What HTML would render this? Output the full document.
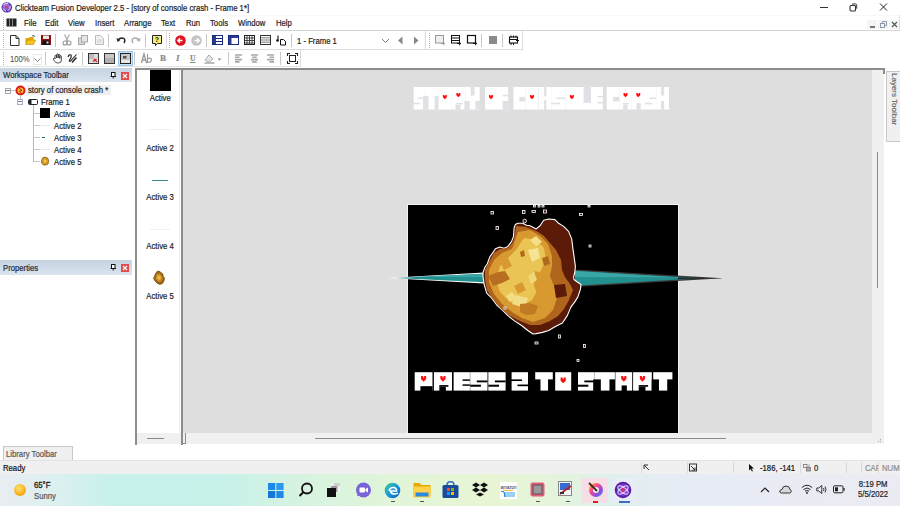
<!DOCTYPE html>
<html><head><meta charset="utf-8">
<style>
*{margin:0;padding:0;box-sizing:border-box}
html,body{width:900px;height:506px;overflow:hidden;background:#fff;font-family:"Liberation Sans",sans-serif;font-size:8px;color:#000;position:relative}
.a{position:absolute}
.t{position:absolute;white-space:nowrap;line-height:1;-webkit-text-stroke:0.2px currentColor}
svg{position:absolute;overflow:visible}
</style></head><body>
<svg style="left:0;top:0" width="15" height="15"><defs><radialGradient id="ai" cx="0.45" cy="0.4" r="0.6"><stop offset="0" stop-color="#b8a0f0"/><stop offset="1" stop-color="#4a1aa8"/></radialGradient></defs><circle cx="6.8" cy="7.3" r="5.3" fill="url(#ai)"/><path d="M3.5 5 Q5 2.8 8 3.2 M10.2 6 Q10.5 9 8 10.8 M3.3 8.5 Q4 10.5 6 11" fill="none" stroke="#efe6ff" stroke-width="1"/><circle cx="6.6" cy="7" r="1.7" fill="#d03a78"/></svg>
<div class="t" style="left:15px;top:4px;font-size:9px;color:#1a1a1a;transform:scaleX(0.857);transform-origin:0 0;">Clickteam Fusion Developer 2.5 - [story of console crash - Frame 1*]</div>
<div class="a" style="left:820px;top:7px;width:8px;height:1px;background:#333;"></div>
<svg style="left:849px;top:3px" width="10" height="10"><rect x="1" y="2.5" width="5.5" height="5.5" rx="1" fill="none" stroke="#333" stroke-width="1.1"/><path d="M3 1 h3.5 a1.2 1.2 0 0 1 1.2 1.2 v3.5" fill="none" stroke="#333" stroke-width="1"/></svg>
<svg style="left:879px;top:3px" width="10" height="10"><path d="M1 0.5 L8 7.5 M8 0.5 L1 7.5" stroke="#222" stroke-width="1"/></svg>
<div class="a" style="left:0px;top:15px;width:900px;height:1px;background:#f8f8f8;"></div>
<div class="a" style="left:3px;top:17px;width:1px;height:1px;background:#b8b8b8;"></div>
<div class="a" style="left:3px;top:19px;width:1px;height:1px;background:#b8b8b8;"></div>
<div class="a" style="left:3px;top:21px;width:1px;height:1px;background:#b8b8b8;"></div>
<div class="a" style="left:3px;top:23px;width:1px;height:1px;background:#b8b8b8;"></div>
<div class="a" style="left:3px;top:25px;width:1px;height:1px;background:#b8b8b8;"></div>
<div class="a" style="left:3px;top:27px;width:1px;height:1px;background:#b8b8b8;"></div>
<div class="a" style="left:3px;top:29px;width:1px;height:1px;background:#b8b8b8;"></div>
<div class="a" style="left:899px;top:15px;width:1px;height:16px;background:#e0e0e0;"></div>
<svg style="left:6px;top:18px" width="12" height="10"><rect x="0.5" y="0.5" width="10" height="8" fill="#222"/><rect x="3" y="1" width="1" height="7" fill="#888"/><rect x="6" y="1" width="1" height="7" fill="#888"/></svg>
<div class="t" style="left:24px;top:19px;font-size:9px;color:#1a1a1a;transform:scaleX(0.857);transform-origin:0 0;">File</div>
<div class="t" style="left:45px;top:19px;font-size:9px;color:#1a1a1a;transform:scaleX(0.857);transform-origin:0 0;">Edit</div>
<div class="t" style="left:68px;top:19px;font-size:9px;color:#1a1a1a;transform:scaleX(0.857);transform-origin:0 0;">View</div>
<div class="t" style="left:95px;top:19px;font-size:9px;color:#1a1a1a;transform:scaleX(0.857);transform-origin:0 0;">Insert</div>
<div class="t" style="left:124px;top:19px;font-size:9px;color:#1a1a1a;transform:scaleX(0.857);transform-origin:0 0;">Arrange</div>
<div class="t" style="left:161px;top:19px;font-size:9px;color:#1a1a1a;transform:scaleX(0.857);transform-origin:0 0;">Text</div>
<div class="t" style="left:186px;top:19px;font-size:9px;color:#1a1a1a;transform:scaleX(0.857);transform-origin:0 0;">Run</div>
<div class="t" style="left:210px;top:19px;font-size:9px;color:#1a1a1a;transform:scaleX(0.857);transform-origin:0 0;">Tools</div>
<div class="t" style="left:238px;top:19px;font-size:9px;color:#1a1a1a;transform:scaleX(0.857);transform-origin:0 0;">Window</div>
<div class="t" style="left:276px;top:19px;font-size:9px;color:#1a1a1a;transform:scaleX(0.857);transform-origin:0 0;">Help</div>
<div class="a" style="left:867px;top:20px;width:10px;height:9px;background:#f4f4f4;"></div>
<div class="a" style="left:878px;top:20px;width:10px;height:9px;background:#f4f4f4;"></div>
<div class="a" style="left:889px;top:20px;width:10px;height:9px;background:#f4f4f4;"></div>
<div class="a" style="left:870px;top:26px;width:5px;height:1.5px;background:#777;"></div>
<svg style="left:880px;top:21px" width="8" height="8"><rect x="0.5" y="2.5" width="4" height="4" fill="none" stroke="#8890a8" stroke-width="0.9"/><path d="M2.5 2.5 v-2 h4 v4 h-2" fill="none" stroke="#8890a8" stroke-width="0.9"/></svg>
<svg style="left:891px;top:21px" width="8" height="8"><path d="M1 1 L6 6 M6 1 L1 6" stroke="#555" stroke-width="1.1"/></svg>
<div class="a" style="left:0px;top:30px;width:900px;height:1px;background:#d4d4d4;"></div>
<div class="a" style="left:0px;top:49px;width:522px;height:1px;background:#dcdcdc;"></div>
<div class="a" style="left:522px;top:31px;width:1px;height:19px;background:#dcdcdc;"></div>
<div class="a" style="left:3px;top:33px;width:1px;height:1px;background:#b0b0b0;"></div>
<div class="a" style="left:3px;top:35px;width:1px;height:1px;background:#b0b0b0;"></div>
<div class="a" style="left:3px;top:37px;width:1px;height:1px;background:#b0b0b0;"></div>
<div class="a" style="left:3px;top:39px;width:1px;height:1px;background:#b0b0b0;"></div>
<div class="a" style="left:3px;top:41px;width:1px;height:1px;background:#b0b0b0;"></div>
<div class="a" style="left:3px;top:43px;width:1px;height:1px;background:#b0b0b0;"></div>
<div class="a" style="left:3px;top:45px;width:1px;height:1px;background:#b0b0b0;"></div>
<div class="a" style="left:3px;top:47px;width:1px;height:1px;background:#b0b0b0;"></div>
<svg style="left:10px;top:35px" width="10" height="11"><path d="M0.5 0.5 h5.5 l3 3 v7 h-8.5z" fill="#fff" stroke="#333"/><path d="M6 0.5 v3 h3" fill="none" stroke="#333"/></svg>
<svg style="left:25px;top:35px" width="11" height="10"><path d="M0.5 3 h3 l1 -1 h4 v6.5 h-8z" fill="#e0a800"/><path d="M0.5 9.5 l2-4.5 h8 l-2 4.5z" fill="#f7c520" stroke="#c08a00" stroke-width="0.6"/><path d="M7 1 l2 -0.5 l0.5 1.5" stroke="#335" fill="none" stroke-width="0.8"/></svg>
<svg style="left:41px;top:35px" width="10" height="10"><rect x="0" y="0" width="10" height="10" fill="#8a0f15"/><rect x="2" y="0.5" width="6" height="3.5" fill="#e8e8e8"/><rect x="1.5" y="5.5" width="7" height="4.5" fill="#111"/><rect x="5.5" y="6.5" width="2" height="2" fill="#ddd"/></svg>
<div class="a" style="left:55px;top:34px;width:1px;height:13px;background:#c8c8c8;"></div>
<svg style="left:62px;top:34px" width="10" height="12"><path d="M2.5 0.5 L6 7 M7.5 0.5 L4 7" stroke="#aaa" stroke-width="1.2"/><circle cx="3" cy="9" r="2" fill="none" stroke="#999" stroke-width="1.1"/><circle cx="7" cy="9" r="2" fill="none" stroke="#999" stroke-width="1.1"/></svg>
<svg style="left:78px;top:35px" width="10" height="10"><rect x="0.5" y="3" width="6" height="6.5" fill="#d8d8d8" stroke="#aaa"/><rect x="3.5" y="0.5" width="6" height="6.5" fill="#e6e6e6" stroke="#aaa"/></svg>
<svg style="left:95px;top:35px" width="9" height="10"><path d="M0.5 0.5 h5 l3 3 v6 h-8z" fill="#f2f2f2" stroke="#bbb"/><path d="M2 5 h5 M2 7 h5" stroke="#ccc"/></svg>
<div class="a" style="left:108px;top:34px;width:1px;height:13px;background:#c8c8c8;"></div>
<svg style="left:116px;top:36px" width="10" height="8"><path d="M2 4 Q5 0.5 8.5 3 Q9.5 5 8 7" fill="none" stroke="#222" stroke-width="1.5"/><path d="M0.5 2 L1.5 6 L4.5 4z" fill="#222"/></svg>
<svg style="left:131px;top:36px" width="10" height="8"><path d="M8 4 Q5 0.5 1.5 3 Q0.5 5 2 7" fill="none" stroke="#aaa" stroke-width="1.5"/><path d="M9.5 2 L8.5 6 L5.5 4z" fill="#aaa"/></svg>
<div class="a" style="left:145px;top:34px;width:1px;height:13px;background:#c8c8c8;"></div>
<svg style="left:152px;top:35px" width="10" height="11"><path d="M0.5 0.5 h9 v8 h-4 l-2 2 v-2 h-3z" fill="#f5f07a" stroke="#222"/><text x="5" y="7.2" font-size="7" font-weight="bold" text-anchor="middle" font-family="Liberation Sans" fill="#111">?</text></svg>
<div class="a" style="left:166px;top:31px;width:1px;height:18px;background:#e0e0e0;"></div>
<div class="a" style="left:169px;top:33px;width:1px;height:1px;background:#b0b0b0;"></div>
<div class="a" style="left:169px;top:35px;width:1px;height:1px;background:#b0b0b0;"></div>
<div class="a" style="left:169px;top:37px;width:1px;height:1px;background:#b0b0b0;"></div>
<div class="a" style="left:169px;top:39px;width:1px;height:1px;background:#b0b0b0;"></div>
<div class="a" style="left:169px;top:41px;width:1px;height:1px;background:#b0b0b0;"></div>
<div class="a" style="left:169px;top:43px;width:1px;height:1px;background:#b0b0b0;"></div>
<div class="a" style="left:169px;top:45px;width:1px;height:1px;background:#b0b0b0;"></div>
<div class="a" style="left:169px;top:47px;width:1px;height:1px;background:#b0b0b0;"></div>
<svg style="left:175px;top:35px" width="11" height="11"><circle cx="5.5" cy="5.5" r="5.3" fill="#e0141e"/><path d="M7.5 5.5 h-4 M5 3.2 L2.8 5.5 L5 7.8" stroke="#fff" stroke-width="1.4" fill="none"/></svg>
<svg style="left:191px;top:35px" width="11" height="11"><circle cx="5.5" cy="5.5" r="5.3" fill="#c4c4c4"/><path d="M3.5 5.5 h4 M6 3.2 L8.2 5.5 L6 7.8" stroke="#fff" stroke-width="1.4" fill="none"/></svg>
<div class="a" style="left:206px;top:34px;width:1px;height:13px;background:#c8c8c8;"></div>
<svg style="left:212px;top:35px" width="11" height="10"><rect x="0.5" y="0.5" width="10" height="9" fill="#fff" stroke="#1a2a7a"/><rect x="1" y="1" width="3" height="8" fill="#2a3a9a"/><path d="M4 3.5 h6 M4 6.5 h6" stroke="#1a2a7a"/></svg>
<svg style="left:228px;top:35px" width="11" height="10"><rect x="0.5" y="0.5" width="10" height="9" fill="#fff" stroke="#1a2a7a"/><rect x="1" y="1" width="2.5" height="8" fill="#2a3a9a"/><rect x="1" y="1" width="9" height="2" fill="#2a3a9a"/></svg>
<svg style="left:244px;top:35px" width="11" height="10"><rect x="0.5" y="0.5" width="10" height="9" fill="#fff" stroke="#222"/><path d="M0.5 3 h10 M0.5 5.5 h10 M0.5 8 h10 M3 0.5 v9 M5.5 0.5 v9 M8 0.5 v9" stroke="#333" stroke-width="0.9"/></svg>
<svg style="left:260px;top:35px" width="11" height="10"><rect x="0.5" y="0.5" width="10" height="9" fill="#fff" stroke="#333"/><path d="M1 2.8 h9 M1 5 h9 M1 7.2 h9" stroke="#555" stroke-width="0.8"/></svg>
<svg style="left:276px;top:35px" width="10" height="11"><path d="M2 0.5 v5" stroke="#111" stroke-width="1.1"/><circle cx="1.5" cy="5.5" r="1.3" fill="#111"/><path d="M4.5 4.5 h3 l2 2 v3.5 h-5z" fill="#fff" stroke="#111"/></svg>
<div class="a" style="left:291px;top:34px;width:1px;height:13px;background:#c8c8c8;"></div>
<div class="t" style="left:297px;top:37px;font-size:9px;color:#222;transform:scaleX(0.857);transform-origin:0 0;">1 - Frame 1</div>
<svg style="left:381px;top:37px" width="10" height="8"><path d="M1 2 L4.5 5.5 L8 2" fill="none" stroke="#666" stroke-width="0.9"/></svg>
<svg style="left:397px;top:36px" width="7" height="9"><path d="M5.5 0.5 L1 4.5 L5.5 8.5z" fill="#888"/></svg>
<svg style="left:413px;top:36px" width="7" height="9"><path d="M1 0.5 L5.5 4.5 L1 8.5z" fill="#888"/></svg>
<div class="a" style="left:425px;top:31px;width:1px;height:19px;background:#dcdcdc;"></div>
<div class="a" style="left:429px;top:33px;width:1px;height:1px;background:#b0b0b0;"></div>
<div class="a" style="left:429px;top:35px;width:1px;height:1px;background:#b0b0b0;"></div>
<div class="a" style="left:429px;top:37px;width:1px;height:1px;background:#b0b0b0;"></div>
<div class="a" style="left:429px;top:39px;width:1px;height:1px;background:#b0b0b0;"></div>
<div class="a" style="left:429px;top:41px;width:1px;height:1px;background:#b0b0b0;"></div>
<div class="a" style="left:429px;top:43px;width:1px;height:1px;background:#b0b0b0;"></div>
<div class="a" style="left:429px;top:45px;width:1px;height:1px;background:#b0b0b0;"></div>
<div class="a" style="left:429px;top:47px;width:1px;height:1px;background:#b0b0b0;"></div>
<svg style="left:435px;top:35px" width="11" height="11"><rect x="0.5" y="0.5" width="8" height="7.5" fill="#eee" stroke="#999"/><path d="M6 8.5 h3.5 M8 6.8 L9.8 8.5 L8 10.2" stroke="#999" fill="none"/></svg>
<svg style="left:451px;top:35px" width="11" height="11"><rect x="0.5" y="0.5" width="8" height="7.5" fill="#fff" stroke="#111"/><path d="M0.5 3 h8 M0.5 5.5 h8" stroke="#111"/><path d="M6 8.5 h3.5 M8 6.8 L9.8 8.5 L8 10.2" stroke="#111" fill="none"/></svg>
<svg style="left:467px;top:35px" width="11" height="11"><rect x="0.5" y="0.5" width="8" height="7.5" fill="#fff" stroke="#111" stroke-width="1.2"/><path d="M6 8.5 h3.5 M8 6.8 L9.8 8.5 L8 10.2" stroke="#111" fill="none"/></svg>
<div class="a" style="left:481px;top:34px;width:1px;height:13px;background:#c8c8c8;"></div>
<div class="a" style="left:489px;top:36px;width:8px;height:8px;background:#8a8a8a;"></div>
<div class="a" style="left:502px;top:34px;width:1px;height:13px;background:#c8c8c8;"></div>
<svg style="left:509px;top:35px" width="11" height="11"><rect x="0.5" y="2" width="8" height="6" fill="#fff" stroke="#111" stroke-width="1.1"/><path d="M0.5 4.5 h8 M2 0.5 v2 M4.5 0.5 v2 M7 0.5 v2 M2 8 v2 M4.5 8 v2" stroke="#111"/><path d="M7 5.5 h3 " stroke="#111"/></svg>
<div class="a" style="left:0px;top:66px;width:300px;height:1px;background:#e2e2e2;"></div>
<div class="a" style="left:300px;top:50px;width:1px;height:17px;background:#dcdcdc;"></div>
<div class="a" style="left:3px;top:52px;width:1px;height:1px;background:#b0b0b0;"></div>
<div class="a" style="left:3px;top:54px;width:1px;height:1px;background:#b0b0b0;"></div>
<div class="a" style="left:3px;top:56px;width:1px;height:1px;background:#b0b0b0;"></div>
<div class="a" style="left:3px;top:58px;width:1px;height:1px;background:#b0b0b0;"></div>
<div class="a" style="left:3px;top:60px;width:1px;height:1px;background:#b0b0b0;"></div>
<div class="a" style="left:3px;top:62px;width:1px;height:1px;background:#b0b0b0;"></div>
<div class="a" style="left:3px;top:64px;width:1px;height:1px;background:#b0b0b0;"></div>
<div class="t" style="left:10px;top:55px;font-size:9px;color:#444;transform:scaleX(0.857);transform-origin:0 0;-webkit-text-stroke:0">100%</div>
<div class="a" style="left:33px;top:54px;width:9px;height:11px;background:#fff;border:1px solid #e8e8e8"></div>
<svg style="left:33px;top:57px" width="9" height="6"><path d="M1.5 1.5 L4.5 4.5 L7.5 1.5" fill="none" stroke="#777" stroke-width="0.9"/></svg>
<div class="a" style="left:45px;top:52px;width:1px;height:13px;background:#c8c8c8;"></div>
<svg style="left:53px;top:53px" width="10" height="11"><path d="M2 6 V3 a0.8 0.8 0 0 1 1.6 0 V5 V1.6 a0.8 0.8 0 0 1 1.6 0 V5 V2 a0.8 0.8 0 0 1 1.6 0 V5.5 V3.5 a0.8 0.8 0 0 1 1.6 0 V7 Q8.4 10 5.5 10 H4.5 Q2.5 10 1 7.5 L0.5 6 a0.8 0.8 0 0 1 1.5 -0.5z" fill="#fff" stroke="#222" stroke-width="0.8"/></svg>
<svg style="left:67px;top:53px" width="11" height="11"><path d="M1 4 Q2 1 4 2 Q5 4 2.5 7 Q1.5 9 3.5 8 L9.5 1.5" fill="none" stroke="#222" stroke-width="1.1"/><path d="M5 9.5 L9.5 4.5" stroke="#222" stroke-width="1.5"/></svg>
<div class="a" style="left:82px;top:52px;width:1px;height:13px;background:#c8c8c8;"></div>
<svg style="left:88px;top:53px" width="11" height="11"><rect x="0.5" y="0.5" width="10" height="10" fill="#ddd" stroke="#333"/><rect x="1" y="1" width="5" height="5" fill="#bbb"/><path d="M5 8.5 L8.5 6 M6 6 L9 9" stroke="#e02020" stroke-width="1.2"/></svg>
<svg style="left:104px;top:53px" width="11" height="11"><rect x="0.5" y="0.5" width="10" height="10" fill="#b0b0b0" stroke="#333"/><rect x="1" y="1" width="9" height="4" fill="#c8c8c8"/></svg>
<div class="a" style="left:118px;top:51px;width:15px;height:15px;background:#cce4f7;border:1px solid #99c9ef"></div>
<svg style="left:120px;top:53px" width="11" height="11"><rect x="0.5" y="0.5" width="10" height="10" fill="#c8c8c8" stroke="#222"/><rect x="3" y="3" width="3.5" height="2.5" fill="#555"/><rect x="1" y="7" width="9" height="3" fill="#e8e8e8"/></svg>
<div class="a" style="left:134px;top:52px;width:1px;height:13px;background:#c8c8c8;"></div>
<svg style="left:141px;top:53px" width="12" height="11"><path d="M0.5 10 L3 1 L5.5 10 M1.5 7 h3" stroke="#999" stroke-width="1.3" fill="none"/><path d="M6.5 1 v9 M6.5 6 q3 -2 4 0.5 q0 3 -4 3" stroke="#999" stroke-width="1.1" fill="none"/></svg>
<div class="t" style="left:160px;top:54px;font-size:9px;color:#8a8a8a;font-weight:bold;font-family:\"Liberation Serif\",serif">B</div>
<div class="t" style="left:176px;top:54px;font-size:9px;color:#8a8a8a;font-weight:bold;font-style:italic;font-family:\"Liberation Serif\",serif">I</div>
<div class="t" style="left:190px;top:54px;font-size:9px;color:#8a8a8a;transform:scaleX(0.857);transform-origin:0 0;font-weight:bold;text-decoration:underline;font-family:\"Liberation Serif\",serif">U</div>
<svg style="left:204px;top:53px" width="20" height="11"><path d="M1 7 L5 2 L9 6 L5 9z" fill="#e8e8e8" stroke="#aaa"/><rect x="0.5" y="9" width="10" height="2" fill="#bbb"/><path d="M13.5 5.5 h4 l-2 2z" fill="#888"/></svg>
<div class="a" style="left:228px;top:52px;width:1px;height:13px;background:#c8c8c8;"></div>
<svg style="left:235px;top:54px" width="8" height="9"><path d="M0 1 h7 M0 3.3 h4.5 M0 5.6 h7 M0 7.9 h4.5" stroke="#a8a8a8" stroke-width="1.6"/></svg>
<svg style="left:251px;top:54px" width="8" height="9"><path d="M0 1 h7 M1.2 3.3 h4.6 M0 5.6 h7 M1.2 7.9 h4.6" stroke="#a8a8a8" stroke-width="1.6"/></svg>
<svg style="left:267px;top:54px" width="8" height="9"><path d="M0 1 h7 M2.5 3.3 h4.5 M0 5.6 h7 M2.5 7.9 h4.5" stroke="#a8a8a8" stroke-width="1.6"/></svg>
<div class="a" style="left:280px;top:52px;width:1px;height:13px;background:#c8c8c8;"></div>
<svg style="left:287px;top:53px" width="11" height="11"><rect x="2.5" y="2.5" width="6" height="6" fill="#fff" stroke="#222"/><path d="M0.5 3 V0.5 H3 M8 0.5 H10.5 V3 M10.5 8 V10.5 H8 M3 10.5 H0.5 V8" fill="none" stroke="#222" stroke-width="1.1"/></svg>
<div class="a" style="left:0px;top:68px;width:132px;height:14px;background:linear-gradient(#c6d3e2,#dbe4ee);"></div>
<div class="t" style="left:3px;top:71px;font-size:9px;color:#1c2838;transform:scaleX(0.857);transform-origin:0 0;">Workspace Toolbar</div>
<svg style="left:110px;top:72px" width="7" height="7"><rect x="1.5" y="0.5" width="3.5" height="4" fill="#fff" stroke="#111" stroke-width="1"/><path d="M0.5 4.5 h5.5 M3.2 4.5 v2" stroke="#111" stroke-width="1"/></svg>
<div class="a" style="left:121px;top:72px;width:8px;height:8px;background:#e04a4a;"></div>
<svg style="left:121px;top:72px" width="8" height="8"><path d="M2 2 L6 6 M6 2 L2 6" stroke="#fff" stroke-width="1.1"/></svg>
<div class="a" style="left:27px;top:85px;width:84px;height:10px;background:#f0f0f0;"></div>
<div class="a" style="left:5px;top:88px;width:6px;height:6px;background:#fff;border:1px solid #a8a8a8"></div>
<div class="a" style="left:6px;top:90px;width:4px;height:1px;background:#6a7aa0;"></div>
<div class="a" style="left:11px;top:90px;width:4px;height:1px;background:#c0c0c0;"></div>
<svg style="left:15px;top:85px" width="11" height="11"><circle cx="5.5" cy="5.5" r="5" fill="#e01818"/><circle cx="5.5" cy="5.5" r="3" fill="#f5c030"/><path d="M4 3 L7 5.5 L4.5 6 L6.5 8.5" stroke="#c01010" fill="none" stroke-width="0.9"/></svg>
<div class="t" style="left:28px;top:86px;font-size:9px;color:#1a1a1a;transform:scaleX(0.857);transform-origin:0 0;">story of console crash *</div>
<div class="a" style="left:20px;top:95px;width:1px;height:4px;background:#c0c0c0;"></div>
<div class="a" style="left:17px;top:99px;width:6px;height:6px;background:#fff;border:1px solid #a8b0c8"></div>
<div class="a" style="left:18px;top:101px;width:4px;height:1px;background:#6a7aa0;"></div>
<svg style="left:28px;top:99px" width="10" height="6"><rect x="0.5" y="0.5" width="9" height="5" rx="1" fill="#fff" stroke="#222"/><rect x="1" y="1" width="2.5" height="4" fill="#222"/></svg>
<div class="t" style="left:41px;top:98px;font-size:9px;color:#1a1a1a;transform:scaleX(0.857);transform-origin:0 0;">Frame 1</div>
<div class="a" style="left:33px;top:105px;width:1px;height:57px;background:#b8b8b8;"></div>
<div class="a" style="left:34px;top:113px;width:6px;height:1px;background:#c8c8c8;"></div>
<div class="a" style="left:34px;top:125px;width:6px;height:1px;background:#c8c8c8;"></div>
<div class="a" style="left:34px;top:137px;width:6px;height:1px;background:#c8c8c8;"></div>
<div class="a" style="left:34px;top:149px;width:6px;height:1px;background:#c8c8c8;"></div>
<div class="a" style="left:34px;top:161px;width:6px;height:1px;background:#c8c8c8;"></div>
<div class="a" style="left:40px;top:108px;width:10px;height:10px;background:#000;"></div>
<div class="a" style="left:40px;top:125px;width:10px;height:1px;background:#e4eef2;"></div>
<div class="a" style="left:42px;top:137px;width:3px;height:1px;background:#2a6a6a;"></div>
<div class="a" style="left:40px;top:149px;width:10px;height:1px;background:#eee8ea;"></div>
<svg style="left:40px;top:156px" width="10" height="10"><path d="M3 1.5 Q6 0.5 8 2.5 Q9.5 5 8 8 Q6 9.5 3.5 9 Q1 7.5 1.5 4.5z" fill="#d89a20" stroke="#7a4a10" stroke-width="0.7"/><path d="M4 3.5 Q6 3 6.5 5 Q6 7 4.5 7z" fill="#f4d060"/></svg>
<div class="t" style="left:54px;top:110px;font-size:9px;color:#1a1a1a;transform:scaleX(0.857);transform-origin:0 0;">Active</div>
<div class="t" style="left:54px;top:122px;font-size:9px;color:#1a1a1a;transform:scaleX(0.857);transform-origin:0 0;">Active 2</div>
<div class="t" style="left:54px;top:134px;font-size:9px;color:#1a1a1a;transform:scaleX(0.857);transform-origin:0 0;">Active 3</div>
<div class="t" style="left:54px;top:146px;font-size:9px;color:#1a1a1a;transform:scaleX(0.857);transform-origin:0 0;">Active 4</div>
<div class="t" style="left:54px;top:158px;font-size:9px;color:#1a1a1a;transform:scaleX(0.857);transform-origin:0 0;">Active 5</div>
<div class="a" style="left:0px;top:260px;width:132px;height:15px;background:linear-gradient(#c6d3e2,#dbe4ee);"></div>
<div class="t" style="left:3px;top:264px;font-size:9px;color:#1c2838;transform:scaleX(0.857);transform-origin:0 0;">Properties</div>
<svg style="left:110px;top:264px" width="7" height="7"><rect x="1.5" y="0.5" width="3.5" height="4" fill="#fff" stroke="#111" stroke-width="1"/><path d="M0.5 4.5 h5.5 M3.2 4.5 v2" stroke="#111" stroke-width="1"/></svg>
<div class="a" style="left:121px;top:264px;width:8px;height:8px;background:#e04a4a;"></div>
<svg style="left:121px;top:264px" width="8" height="8"><path d="M2 2 L6 6 M6 2 L2 6" stroke="#fff" stroke-width="1.1"/></svg>
<div class="a" style="left:135px;top:68px;width:2px;height:377px;background:#8c8c8c;"></div>
<div class="a" style="left:135px;top:68px;width:46px;height:2px;background:#8c8c8c;"></div>
<div class="a" style="left:179px;top:70px;width:1px;height:363px;background:#f0f0f0;"></div>
<div class="a" style="left:137px;top:433px;width:44px;height:11px;background:#f0f0f0;"></div>
<div class="a" style="left:147px;top:438px;width:17px;height:1px;background:#8a8a8a;"></div>
<div class="a" style="left:150px;top:70px;width:21px;height:21px;background:#000;"></div>
<div class="a" style="left:149px;top:129px;width:22px;height:1px;background:#e8f0f4;"></div>
<div class="a" style="left:152px;top:180px;width:16px;height:1px;background:#3a8a8a;"></div>
<div class="a" style="left:150px;top:229px;width:20px;height:1px;background:#eef0f4;"></div>
<svg style="left:152px;top:269px" width="14" height="17"><path d="M5.5 2 L8 2.5 L9.5 4 L11 5 L11 7 L12.5 9 L12 12 L10.5 14.5 L8 15.5 L5.5 14.5 L3 12 L1.5 9.5 L2.5 7 L3.5 4.5z" fill="#9a6414" stroke="#6a3a08" stroke-width="0.6"/><path d="M5 5 L8 4.5 L10 7.5 L10.5 10.5 L8.5 13 L6 12.5 L3.5 10 L4 7z" fill="#cc8e26"/><path d="M5.5 7 L8 6.5 L9 9 L7.5 11 L5.5 10z" fill="#e8b848"/></svg>
<div class="t" style="left:138px;width:45px;text-align:center;top:94px;font-size:9px;color:#1a1a1a"><span style="display:inline-block;transform:scaleX(0.857)">Active</span></div>
<div class="t" style="left:138px;width:45px;text-align:center;top:144px;font-size:9px;color:#1a1a1a"><span style="display:inline-block;transform:scaleX(0.857)">Active 2</span></div>
<div class="t" style="left:138px;width:45px;text-align:center;top:193px;font-size:9px;color:#1a1a1a"><span style="display:inline-block;transform:scaleX(0.857)">Active 3</span></div>
<div class="t" style="left:138px;width:45px;text-align:center;top:242px;font-size:9px;color:#1a1a1a"><span style="display:inline-block;transform:scaleX(0.857)">Active 4</span></div>
<div class="t" style="left:138px;width:45px;text-align:center;top:292px;font-size:9px;color:#1a1a1a"><span style="display:inline-block;transform:scaleX(0.857)">Active 5</span></div>
<div class="a" style="left:181px;top:68px;width:704px;height:2px;background:#8c8c8c;"></div>
<div class="a" style="left:181px;top:68px;width:2px;height:377px;background:#8c8c8c;"></div>
<div class="a" style="left:183px;top:70px;width:689px;height:363px;background:#dedede;"></div>
<div class="a" style="left:872px;top:70px;width:12px;height:374px;background:#f0f0f0;"></div>
<div class="a" style="left:183px;top:433px;width:689px;height:11px;background:#f0f0f0;"></div>
<div class="a" style="left:883px;top:68px;width:2px;height:6px;background:#8c8c8c;"></div>
<div class="a" style="left:877px;top:152px;width:1px;height:136px;background:#8c8c8c;"></div>
<div class="a" style="left:315px;top:438px;width:411px;height:1px;background:#8c8c8c;"></div>
<div class="a" style="left:185px;top:433px;width:1px;height:10px;background:#8c8c8c;"></div>
<div class="a" style="left:181px;top:443px;width:5px;height:1px;background:#8c8c8c;"></div>
<div class="a" style="left:880px;top:441px;width:1px;height:1px;background:#aaa;"></div>
<div class="a" style="left:878px;top:441px;width:1px;height:1px;background:#aaa;"></div>
<div class="a" style="left:880px;top:439px;width:1px;height:1px;background:#aaa;"></div>
<div class="a" style="left:886px;top:71px;width:14px;height:71px;background:#f0f0f0;border:1px solid #c8c8c8;border-right:none"></div>
<div class="t" style="left:888px;top:73px;font-size:8px;color:#5a5a5a;-webkit-text-stroke:0.1px #5a5a5a;transform-origin:0 0;transform:translate(10px,0) rotate(90deg)">Layers Toolbar</div>
<div class="a" style="left:407px;top:204px;width:272px;height:229px;background:#f4f4f4;"></div>
<div class="a" style="left:408px;top:205px;width:270px;height:228px;background:#000;"></div>
<svg style="left:0;top:0" width="900" height="506"><rect x="414.70" y="372.20" width="17.80" height="18.40" fill="#fff"/><rect x="420.40" y="386.18" width="12.10" height="5.89" fill="#000"/><path d="M421.00 375.96 h2.08 v1.43 h1.04 v-1.43 h2.08 v3.15 l-2.60 2.57 l-2.60 -2.57z" fill="#ff1010"/><rect x="433.90" y="372.20" width="18.10" height="18.40" fill="#fff"/><rect x="439.33" y="385.08" width="9.05" height="1.66" fill="#000"/><rect x="439.33" y="386.74" width="6.52" height="5.34" fill="#000"/><path d="M440.35 375.96 h2.08 v1.43 h1.04 v-1.43 h2.08 v3.15 l-2.60 2.57 l-2.60 -2.57z" fill="#ff1010"/><rect x="453.60" y="372.20" width="16.30" height="18.40" fill="#fff"/><rect x="462.56" y="379.38" width="7.33" height="1.47" fill="#000"/><rect x="462.56" y="384.34" width="7.33" height="1.47" fill="#000"/><rect x="470.20" y="372.20" width="17.30" height="18.40" fill="#fff"/><rect x="476.77" y="380.48" width="10.73" height="1.84" fill="#000"/><rect x="470.20" y="384.71" width="10.73" height="2.02" fill="#000"/><rect x="488.30" y="372.20" width="17.30" height="18.40" fill="#fff"/><rect x="494.87" y="380.48" width="10.73" height="1.84" fill="#000"/><rect x="488.30" y="384.71" width="10.73" height="2.02" fill="#000"/><rect x="511.60" y="372.20" width="16.40" height="18.40" fill="#fff"/><rect x="510.29" y="379.38" width="11.64" height="1.66" fill="#000"/><rect x="517.50" y="384.53" width="11.81" height="1.66" fill="#000"/><rect x="535.20" y="372.20" width="17.60" height="18.40" fill="#fff"/><rect x="533.79" y="379.38" width="6.69" height="12.70" fill="#000"/><rect x="548.05" y="379.38" width="6.16" height="12.70" fill="#000"/><rect x="555.20" y="372.20" width="16.00" height="18.40" fill="#fff"/><path d="M560.60 377.62 h2.08 v1.43 h1.04 v-1.43 h2.08 v3.15 l-2.60 2.57 l-2.60 -2.57z" fill="#ff1010"/><rect x="578.00" y="372.20" width="16.70" height="18.40" fill="#fff"/><rect x="584.35" y="380.48" width="10.35" height="1.84" fill="#000"/><rect x="578.00" y="384.71" width="10.35" height="2.02" fill="#000"/><rect x="594.80" y="372.20" width="20.10" height="18.40" fill="#fff"/><rect x="593.19" y="379.38" width="7.64" height="12.70" fill="#000"/><rect x="609.47" y="379.38" width="7.04" height="12.70" fill="#000"/><rect x="615.40" y="372.20" width="16.80" height="18.40" fill="#fff"/><rect x="621.62" y="385.45" width="5.21" height="6.62" fill="#000"/><path d="M621.20 375.96 h2.08 v1.43 h1.04 v-1.43 h2.08 v3.15 l-2.60 2.57 l-2.60 -2.57z" fill="#ff1010"/><rect x="633.10" y="372.20" width="18.70" height="18.40" fill="#fff"/><rect x="638.71" y="385.08" width="9.35" height="1.66" fill="#000"/><rect x="638.71" y="386.74" width="6.73" height="5.34" fill="#000"/><path d="M639.85 375.96 h2.08 v1.43 h1.04 v-1.43 h2.08 v3.15 l-2.60 2.57 l-2.60 -2.57z" fill="#ff1010"/><rect x="653.20" y="372.20" width="19.20" height="18.40" fill="#fff"/><rect x="651.66" y="379.38" width="7.30" height="12.70" fill="#000"/><rect x="667.22" y="379.38" width="6.72" height="12.70" fill="#000"/></svg>
<svg style="left:0;top:0" width="900" height="506"><rect x="413.70" y="87.00" width="10.50" height="22.50" fill="#fff"/><rect x="417.69" y="97.46" width="6.51" height="1.58" fill="#dfe1e5"/><rect x="413.70" y="102.75" width="6.51" height="1.58" fill="#dfe1e5"/><rect x="424.20" y="87.00" width="14.30" height="22.50" fill="#fff"/><rect x="423.06" y="95.78" width="5.43" height="15.53" fill="#dfe1e5"/><rect x="434.64" y="95.78" width="5.01" height="15.53" fill="#dfe1e5"/><rect x="438.50" y="87.00" width="12.70" height="22.50" fill="#fff"/><path d="M442.85 94.92 h1.60 v1.10 h0.80 v-1.10 h1.60 v2.42 l-2.00 1.98 l-2.00 -1.98z" fill="#ff1010"/><rect x="451.20" y="87.00" width="14.30" height="22.50" fill="#fff"/><rect x="455.49" y="102.97" width="7.15" height="1.58" fill="#dfe1e5"/><rect x="455.49" y="104.78" width="5.15" height="6.53" fill="#dfe1e5"/><path d="M456.35 92.90 h1.60 v1.10 h0.80 v-1.10 h1.60 v2.42 l-2.00 1.98 l-2.00 -1.98z" fill="#ff1010"/><rect x="465.50" y="87.00" width="14.20" height="22.50" fill="#fff"/><rect x="470.61" y="85.20" width="3.98" height="10.35" fill="#dfe1e5"/><rect x="464.36" y="100.95" width="5.40" height="10.35" fill="#dfe1e5"/><rect x="475.44" y="100.95" width="5.40" height="10.35" fill="#dfe1e5"/><rect x="485.00" y="87.00" width="12.00" height="22.50" fill="#fff"/><path d="M489.00 94.92 h1.60 v1.10 h0.80 v-1.10 h1.60 v2.42 l-2.00 1.98 l-2.00 -1.98z" fill="#ff1010"/><rect x="497.00" y="87.00" width="11.20" height="22.50" fill="#fff"/><rect x="502.60" y="94.76" width="6.50" height="1.58" fill="#dfe1e5"/><rect x="502.60" y="100.95" width="6.50" height="10.35" fill="#dfe1e5"/><rect x="513.40" y="87.00" width="12.10" height="22.50" fill="#fff"/><rect x="519.45" y="96.90" width="7.02" height="4.50" fill="#dfe1e5"/><rect x="525.50" y="87.00" width="13.00" height="22.50" fill="#fff"/><path d="M530.00 94.92 h1.60 v1.10 h0.80 v-1.10 h1.60 v2.42 l-2.00 1.98 l-2.00 -1.98z" fill="#ff1010"/><rect x="539.00" y="87.00" width="12.20" height="22.50" fill="#fff"/><rect x="544.12" y="85.20" width="2.20" height="11.25" fill="#dfe1e5"/><rect x="544.12" y="100.05" width="2.20" height="11.25" fill="#dfe1e5"/><rect x="551.20" y="87.00" width="14.30" height="22.50" fill="#fff"/><rect x="556.63" y="97.46" width="8.87" height="1.58" fill="#dfe1e5"/><rect x="551.20" y="102.75" width="8.87" height="1.58" fill="#dfe1e5"/><rect x="565.50" y="87.00" width="12.70" height="22.50" fill="#fff"/><path d="M569.85 94.92 h1.60 v1.10 h0.80 v-1.10 h1.60 v2.42 l-2.00 1.98 l-2.00 -1.98z" fill="#ff1010"/><rect x="578.20" y="87.00" width="12.80" height="22.50" fill="#fff"/><rect x="583.58" y="85.20" width="8.45" height="17.55" fill="#dfe1e5"/><rect x="591.00" y="87.00" width="12.00" height="22.50" fill="#fff"/><rect x="597.60" y="95.89" width="5.40" height="1.57" fill="#dfe1e5"/><rect x="597.60" y="101.96" width="5.40" height="1.58" fill="#dfe1e5"/><rect x="606.70" y="87.00" width="12.80" height="22.50" fill="#fff"/><rect x="613.10" y="96.90" width="7.42" height="4.50" fill="#dfe1e5"/><rect x="619.50" y="87.00" width="12.00" height="22.50" fill="#fff"/><rect x="623.10" y="102.97" width="6.00" height="1.58" fill="#dfe1e5"/><rect x="623.10" y="104.78" width="4.32" height="6.53" fill="#dfe1e5"/><path d="M623.50 92.90 h1.60 v1.10 h0.80 v-1.10 h1.60 v2.42 l-2.00 1.98 l-2.00 -1.98z" fill="#ff1010"/><rect x="631.50" y="87.00" width="13.50" height="22.50" fill="#fff"/><rect x="636.50" y="103.20" width="4.19" height="8.10" fill="#dfe1e5"/><path d="M636.25 92.90 h1.60 v1.10 h0.80 v-1.10 h1.60 v2.42 l-2.00 1.98 l-2.00 -1.98z" fill="#ff1010"/><rect x="645.00" y="87.00" width="11.20" height="22.50" fill="#fff"/><rect x="649.26" y="97.46" width="6.94" height="1.58" fill="#dfe1e5"/><rect x="645.00" y="102.75" width="6.94" height="1.58" fill="#dfe1e5"/><rect x="656.20" y="87.00" width="12.80" height="22.50" fill="#fff"/><rect x="661.06" y="85.20" width="3.07" height="10.35" fill="#dfe1e5"/><rect x="661.06" y="100.95" width="3.07" height="10.35" fill="#dfe1e5"/></svg>
<svg style="left:0;top:0" width="900" height="506"><path d="M387 278 L484 272.5 L484 283.5z" fill="#fff"/><path d="M395 278 L484 273.8 L484 282.3z" fill="#22908f"/><path d="M410 277 L484 273.8 L484 277z" fill="#3aa6a6"/><path d="M723 278.3 L575 269.5 L575 287z" fill="#3a3a3a"/><path d="M700 278.3 L575 270.8 L575 285.8z" fill="#22908f"/><path d="M680 277.5 L575 271 L575 277z" fill="#3aa6a6"/><path d="M678 277.6 L723 278.3 L678 279z" fill="#222"/></svg>
<svg style="left:0;top:0" width="900" height="506"><polygon points="515.3,224.6 517.8,223.3 522.8,223.3 526.5,225.2 530,225.8 536.2,228.9 540,225.8 543.7,220.2 548.7,219 554.9,219.6 558.6,223.3 563.6,226.4 568.6,231.4 571.7,238.9 572.9,248.8 574.2,257.6 575.4,266.3 574.8,272.5 573.6,277 574,279.5 577.3,282 581,284.5 580.4,289.4 577.9,296.9 574.8,301.9 571,306.9 567.3,315.6 562.4,323 554.9,326.8 548.7,330.5 542.4,332.4 536.2,333.6 533,334 527.8,330.5 521.6,325.5 514.1,320.6 507.9,315.6 502.9,310.6 496.7,305 491.7,298.2 486.7,293.2 484.2,284.5 483,277 483,272.5 484.8,267.5 487.3,263.8 489.8,256.9 492.9,252.6 495.4,248.8 499.8,247 504.1,248.2 507.9,246.4 511.6,241.4 513.5,236.4 514.1,227.7" fill="#5c1a08" stroke="#fff" stroke-width="1.1" stroke-linejoin="round"/><polygon points="516,226 526,227 534,230 538,232 544,236 550,243 556,250 561,260 562,270 565,277 570,284 573,290 569,300 564,309 558,316 550,321 540,325 530,325 520,321 510,316 500,308 492,298 487,290 485,280 485,270 490,260 494,253 500,249 508,248 513,242 515,234" fill="#b0651c"/><polygon points="518,232 530,230 540,236 548,244 552,256 552,266 550,276 554,286 557,298 553,310 545,318 533,322 522,318 512,312 502,304 494,294 489,282 489,270 494,260 502,253 512,249" fill="#d89a30"/><polygon points="524,238 536,240 544,248 546,260 540,272 540,286 532,300 522,306 510,302 500,292 496,280 500,266 508,258 516,250" fill="#eac455"/><polygon points="528,250 538,248 540,258 532,262" fill="#f6e494"/><polygon points="515,295 528,298 525,308 512,304" fill="#f2dc88"/><polygon points="554,285 565,284 567,296 556,298" fill="#5c1a08"/><polygon points="488,276 498,272 505,271 510,279 502,283 493,286" fill="#b86e20"/><polygon points="520,304 530,303 538,306 535,314 526,315 520,312" fill="#c07a24"/><polygon points="535,271 545,274 548,289 538,296 534,286" fill="#d89a30"/><polygon points="500,262 508,258 512,266 504,270" fill="#d89a30"/><polygon points="514,286 522,282 526,290 518,294" fill="#d89a30"/><polygon points="530,240 536,236 542,242 536,246" fill="#f4e08a"/><polygon points="506,296 512,292 516,298 510,302" fill="#f2dc84"/><polygon points="528,276 534,272 537,280 531,284" fill="#f0d878"/><polygon points="520,252 524,250 525,256 521,257" fill="#b06a1c"/><polygon points="542,258 548,256 550,264 544,266" fill="#b06a1c"/></svg>
<svg style="left:0;top:0" width="900" height="506" fill="#3a1206" stroke="#fff" stroke-width="0.8"><rect x="491" y="211.5" width="2.5" height="2.5"/><rect x="496" y="226.5" width="2.5" height="3"/><rect x="522.5" y="210.5" width="2.5" height="3"/><rect x="532" y="210.5" width="3.5" height="2"/><rect x="533.5" y="205.5" width="2" height="1.5"/><rect x="538" y="205.5" width="2" height="1.5"/><rect x="542" y="205.5" width="2" height="1.5"/><rect x="543.5" y="210" width="3" height="3"/><rect x="579.5" y="213.5" width="3" height="2"/><rect x="588" y="205.5" width="2" height="1.5"/><rect x="589" y="245" width="2" height="2"/><rect x="535" y="342" width="3" height="2"/><rect x="558.5" y="335" width="2" height="3"/><rect x="583.5" y="344.5" width="2" height="3"/><rect x="577" y="359.5" width="2" height="2"/><rect x="504" y="307" width="2" height="2"/><circle cx="524.7" cy="221" r="1.8"/></svg>
<div class="a" style="left:3px;top:446px;width:70px;height:14px;background:#f0f0f0;border:1px solid #c8c8c8;border-bottom:none"></div>
<div class="t" style="left:6px;top:450px;font-size:9px;color:#555;transform:scaleX(0.857);transform-origin:0 0;">Library Toolbar</div>
<div class="a" style="left:0px;top:460px;width:900px;height:1px;background:#e2e2e2;"></div>
<div class="a" style="left:0px;top:461px;width:900px;height:13px;background:#f0f0f0;"></div>
<div class="t" style="left:3px;top:464px;font-size:9px;color:#111;transform:scaleX(0.857);transform-origin:0 0;">Ready</div>
<div class="a" style="left:641px;top:462px;width:1px;height:11px;background:#d8d8d8;"></div>
<div class="a" style="left:687px;top:462px;width:1px;height:11px;background:#d8d8d8;"></div>
<div class="a" style="left:733px;top:462px;width:1px;height:11px;background:#d8d8d8;"></div>
<div class="a" style="left:800px;top:462px;width:1px;height:11px;background:#d8d8d8;"></div>
<div class="a" style="left:846px;top:462px;width:1px;height:11px;background:#d8d8d8;"></div>
<div class="a" style="left:861px;top:462px;width:1px;height:11px;background:#d8d8d8;"></div>
<div class="a" style="left:878px;top:462px;width:1px;height:11px;background:#d8d8d8;"></div>
<svg style="left:643px;top:464px" width="8" height="8"><path d="M1 1 h4 M1 1 v4 M1 1 L6 6" stroke="#333" stroke-width="1"/></svg>
<svg style="left:689px;top:463px" width="8" height="9"><rect x="0.5" y="1" width="7" height="7" fill="none" stroke="#333"/><path d="M2 3 L6 7 M6 4.5 V7 H3.5" stroke="#333" fill="none"/></svg>
<svg style="left:748px;top:463px" width="7" height="9"><path d="M1 1 L6 5.5 H3.5 L5 8 L4 8.5 L2.5 6 L1 7.5z" fill="#111"/></svg>
<div class="t" style="left:760px;top:464px;font-size:9px;color:#111;transform:scaleX(0.857);transform-origin:0 0;">-186, -141</div>
<svg style="left:803px;top:464px" width="9" height="8"><rect x="0.5" y="0.5" width="3.5" height="3" fill="none" stroke="#777" stroke-width="0.8"/><rect x="3.5" y="3.5" width="4" height="3.5" fill="#aaa" stroke="#777" stroke-width="0.8"/><path d="M6 0.5 v3" stroke="#777" stroke-width="0.8"/></svg>
<div class="t" style="left:814px;top:464px;font-size:9px;color:#222;transform:scaleX(0.857);transform-origin:0 0;">0</div>
<div class="a" style="left:864px;top:462px;width:14px;height:11px;overflow:hidden"><div class="t" style="left:1px;top:2px;font-size:9px;color:#8a8a8a;transform:scaleX(0.857);transform-origin:0 0">CAP</div></div>
<div class="t" style="left:882px;top:464px;font-size:9px;color:#8a8a8a;transform:scaleX(0.857);transform-origin:0 0;">NUM</div>
<div class="a" style="left:0px;top:474px;width:900px;height:32px;background:linear-gradient(90deg,#e9edf1 0%,#dcf0f0 6%,#c9f1ec 12%,#c8f1ea 25%,#d6f3e0 33%,#e2f5d8 45%,#e8f5d4 55%,#e4f4dc 62%,#ddf0ec 68%,#e6ecf4 74%,#ecebf3 100%);"></div>
<svg style="left:13px;top:483px" width="14" height="14"><defs><radialGradient id="sun" cx="0.4" cy="0.35" r="0.7"><stop offset="0" stop-color="#ffe070"/><stop offset="1" stop-color="#f5a000"/></radialGradient></defs><circle cx="7" cy="7" r="6" fill="url(#sun)"/></svg>
<div class="t" style="left:34px;top:481px;font-size:9px;color:#222;transform:scaleX(0.857);transform-origin:0 0;-webkit-text-stroke:0.35px #222">65°F</div>
<div class="t" style="left:34px;top:492px;font-size:9px;color:#555;transform:scaleX(0.857);transform-origin:0 0;">Sunny</div>
<svg style="left:268px;top:483px" width="16" height="15"><rect x="0" y="0" width="7.3" height="7" fill="#1a8ae6"/><rect x="8.3" y="0" width="7.3" height="7" fill="#2a9af0"/><rect x="0" y="8" width="7.3" height="7" fill="#1478d8"/><rect x="8.3" y="8" width="7.3" height="7" fill="#1e88e4"/></svg>
<svg style="left:298px;top:482px" width="16" height="16"><circle cx="9" cy="6.5" r="5" fill="none" stroke="#111" stroke-width="1.8"/><path d="M5.5 10 L1.5 14" stroke="#111" stroke-width="2"/></svg>
<svg style="left:326px;top:482px" width="15" height="16"><rect x="5" y="1" width="9" height="9" fill="#f4f4f4"/><rect x="5" y="4" width="6.5" height="6" fill="#9a9a9a"/><rect x="7.5" y="1" width="6.5" height="3" fill="#d0d0d0"/><rect x="1" y="6" width="9" height="9" fill="#111"/></svg>
<svg style="left:355px;top:482px" width="17" height="16"><circle cx="8.5" cy="8" r="7.5" fill="#7a62d8"/><path d="M2 14 L3 11 L6 13z" fill="#7a62d8"/><rect x="4.5" y="5.5" width="5.5" height="5" rx="1" fill="#fff"/><path d="M10.5 7 L13 5.5 V10.5 L10.5 9z" fill="#fff"/></svg>
<svg style="left:384px;top:482px" width="17" height="17"><defs><linearGradient id="edg" x1="0" y1="0" x2="1" y2="1"><stop offset="0" stop-color="#3fd08a"/><stop offset="0.5" stop-color="#1a9ae0"/><stop offset="1" stop-color="#0a5ab8"/></linearGradient></defs><circle cx="8.5" cy="8.5" r="7.8" fill="url(#edg)"/><path d="M5 9 Q6 5 10 5.5 Q13 6.5 12.5 9 H6.5 Q7 12 11 12 Q13 11.8 14 11" fill="none" stroke="#fff" stroke-width="1.6"/></svg>
<div class="a" style="left:391px;top:501px;width:4px;height:1px;background:#555;"></div>
<svg style="left:413px;top:482px" width="18" height="16"><path d="M0.5 1 h6 l2 2 h9 v12 h-17z" fill="#e8a800"/><rect x="0.5" y="4.5" width="17" height="11" fill="#ffd24a"/><rect x="2.5" y="10.5" width="13" height="4" fill="#2a8ae0"/></svg>
<div class="a" style="left:420px;top:501px;width:4px;height:1px;background:#555;"></div>
<svg style="left:442px;top:481px" width="17" height="18"><path d="M5 4 Q5 0.8 8.5 0.8 Q12 0.8 12 4" fill="none" stroke="#2a6ac8" stroke-width="1.5"/><rect x="0.5" y="4" width="16" height="13" rx="1.5" fill="#1a4a9a"/><rect x="5" y="7" width="3" height="3" fill="#f25022"/><rect x="9" y="7" width="3" height="3" fill="#7fba00"/><rect x="5" y="11" width="3" height="3" fill="#00a4ef"/><rect x="9" y="11" width="3" height="3" fill="#ffb900"/></svg>
<svg style="left:472px;top:482px" width="16" height="15"><path d="M4 0.5 L8 3 L4 5.5 L0 3z M12 0.5 L16 3 L12 5.5 L8 3z M4 5.5 L8 8 L4 10.5 L0 8z M12 5.5 L16 8 L12 10.5 L8 8z M8 10.5 L12 12.5 L8 14.5 L4 12.5z" fill="#111"/></svg>
<svg style="left:500px;top:482px" width="17" height="17"><rect x="0" y="0" width="17" height="17" fill="#fff"/><text x="8.5" y="7" font-size="4.5" font-family="Liberation Sans" text-anchor="middle" fill="#222">amazon</text><path d="M3 8 Q8 9.5 13 8" stroke="#f90" fill="none" stroke-width="0.8"/><rect x="4" y="10" width="11" height="5" fill="#9ad0f0"/><path d="M1 9 L4 10 L5 15" stroke="#1a7ad0" fill="none"/></svg>
<svg style="left:530px;top:482px" width="15" height="15"><rect x="0.5" y="0.5" width="14" height="14" rx="2" fill="#e85a78"/><rect x="3" y="3" width="9" height="9" fill="#999" stroke="#555"/></svg>
<div class="a" style="left:536px;top:501px;width:4px;height:1px;background:#555;"></div>
<svg style="left:558px;top:481px" width="15" height="16"><rect x="0.5" y="0.5" width="13" height="14" fill="#f4f4f4" stroke="#888"/><rect x="2" y="2" width="10" height="7" fill="#3a6ad0"/><path d="M2 13 L13 5" stroke="#b02020" stroke-width="1.6"/><rect x="2" y="11" width="4" height="2" fill="#333"/></svg>
<div class="a" style="left:566px;top:501px;width:4px;height:1px;background:#555;"></div>
<div class="a" style="left:582px;top:478px;width:26px;height:25px;background:#f6dde6;"></div>
<svg style="left:588px;top:482px" width="16" height="16"><defs><linearGradient id="cc" x1="0" y1="0" x2="1" y2="1"><stop offset="0" stop-color="#ffd000"/><stop offset="0.35" stop-color="#ff4a8a"/><stop offset="0.7" stop-color="#8a4ae0"/><stop offset="1" stop-color="#20c0f0"/></linearGradient></defs><circle cx="8" cy="8" r="7" fill="url(#cc)"/><circle cx="8" cy="8" r="3" fill="#e8f0f8"/><path d="M1 1 L9 9" stroke="#3a2a1a" stroke-width="1.8"/></svg>
<div class="a" style="left:593px;top:501px;width:5px;height:2px;background:#d82020;"></div>
<div class="a" style="left:612px;top:478px;width:25px;height:25px;background:#e8ecf6;"></div>
<svg style="left:614px;top:481px" width="18" height="18"><circle cx="9" cy="9" r="8.3" fill="#5a22a8"/><circle cx="9" cy="9" r="6" fill="#7a3ad0"/><ellipse cx="9" cy="9" rx="6" ry="2.5" fill="none" stroke="#e8d8ff" stroke-width="1" transform="rotate(-35 9 9)"/><ellipse cx="9" cy="9" rx="6" ry="2.5" fill="none" stroke="#e8d8ff" stroke-width="1" transform="rotate(35 9 9)"/><circle cx="9" cy="9" r="1.8" fill="#e02a6a"/></svg>
<div class="a" style="left:619px;top:501px;width:11px;height:2px;background:#3a70c8;"></div>
<svg style="left:760px;top:487px" width="10" height="6"><path d="M1 5 L5 1 L9 5" fill="none" stroke="#222" stroke-width="1.2"/></svg>
<svg style="left:779px;top:485px" width="13" height="9"><path d="M2.5 8 Q0.5 8 0.8 6 Q1.2 4.5 3 4.6 Q3.5 1 7 1 Q10.5 1 11 4.5 Q12.5 5 12.2 6.5 Q12 8 10.5 8z" fill="#d8d8d8" stroke="#333" stroke-width="1"/></svg>
<svg style="left:801px;top:484px" width="12" height="10"><path d="M0.8 3.5 Q6 -1 11.2 3.5 M2.5 5.5 Q6 2.5 9.5 5.5 M4 7.2 Q6 6 8 7.2" fill="none" stroke="#222" stroke-width="1"/><circle cx="6" cy="9" r="0.9" fill="#222"/></svg>
<svg style="left:816px;top:485px" width="11" height="9"><path d="M0.8 3 h2 l3 -2.5 v8 l-3 -2.5 h-2z" fill="none" stroke="#222" stroke-width="0.9"/><path d="M7.5 3 Q8.5 4.5 7.5 6 M9 1.5 Q11 4.5 9 7.5" fill="none" stroke="#222" stroke-width="0.9"/></svg>
<svg style="left:833px;top:485px" width="12" height="9"><rect x="0.5" y="0.8" width="9.5" height="7" rx="1.2" fill="none" stroke="#222"/><rect x="2" y="2.3" width="3" height="4" fill="#222"/><rect x="10.5" y="3" width="1.2" height="2.6" fill="#222"/></svg>
<div class="t" style="left:800px;width:88px;text-align:right;top:480px;font-size:9px;color:#222"><span style="display:inline-block;transform:scaleX(0.857);transform-origin:100% 0">8:19 PM</span></div>
<div class="t" style="left:800px;width:88px;text-align:right;top:490px;font-size:9px;color:#222"><span style="display:inline-block;transform:scaleX(0.857);transform-origin:100% 0">5/5/2022</span></div>
</body></html>
